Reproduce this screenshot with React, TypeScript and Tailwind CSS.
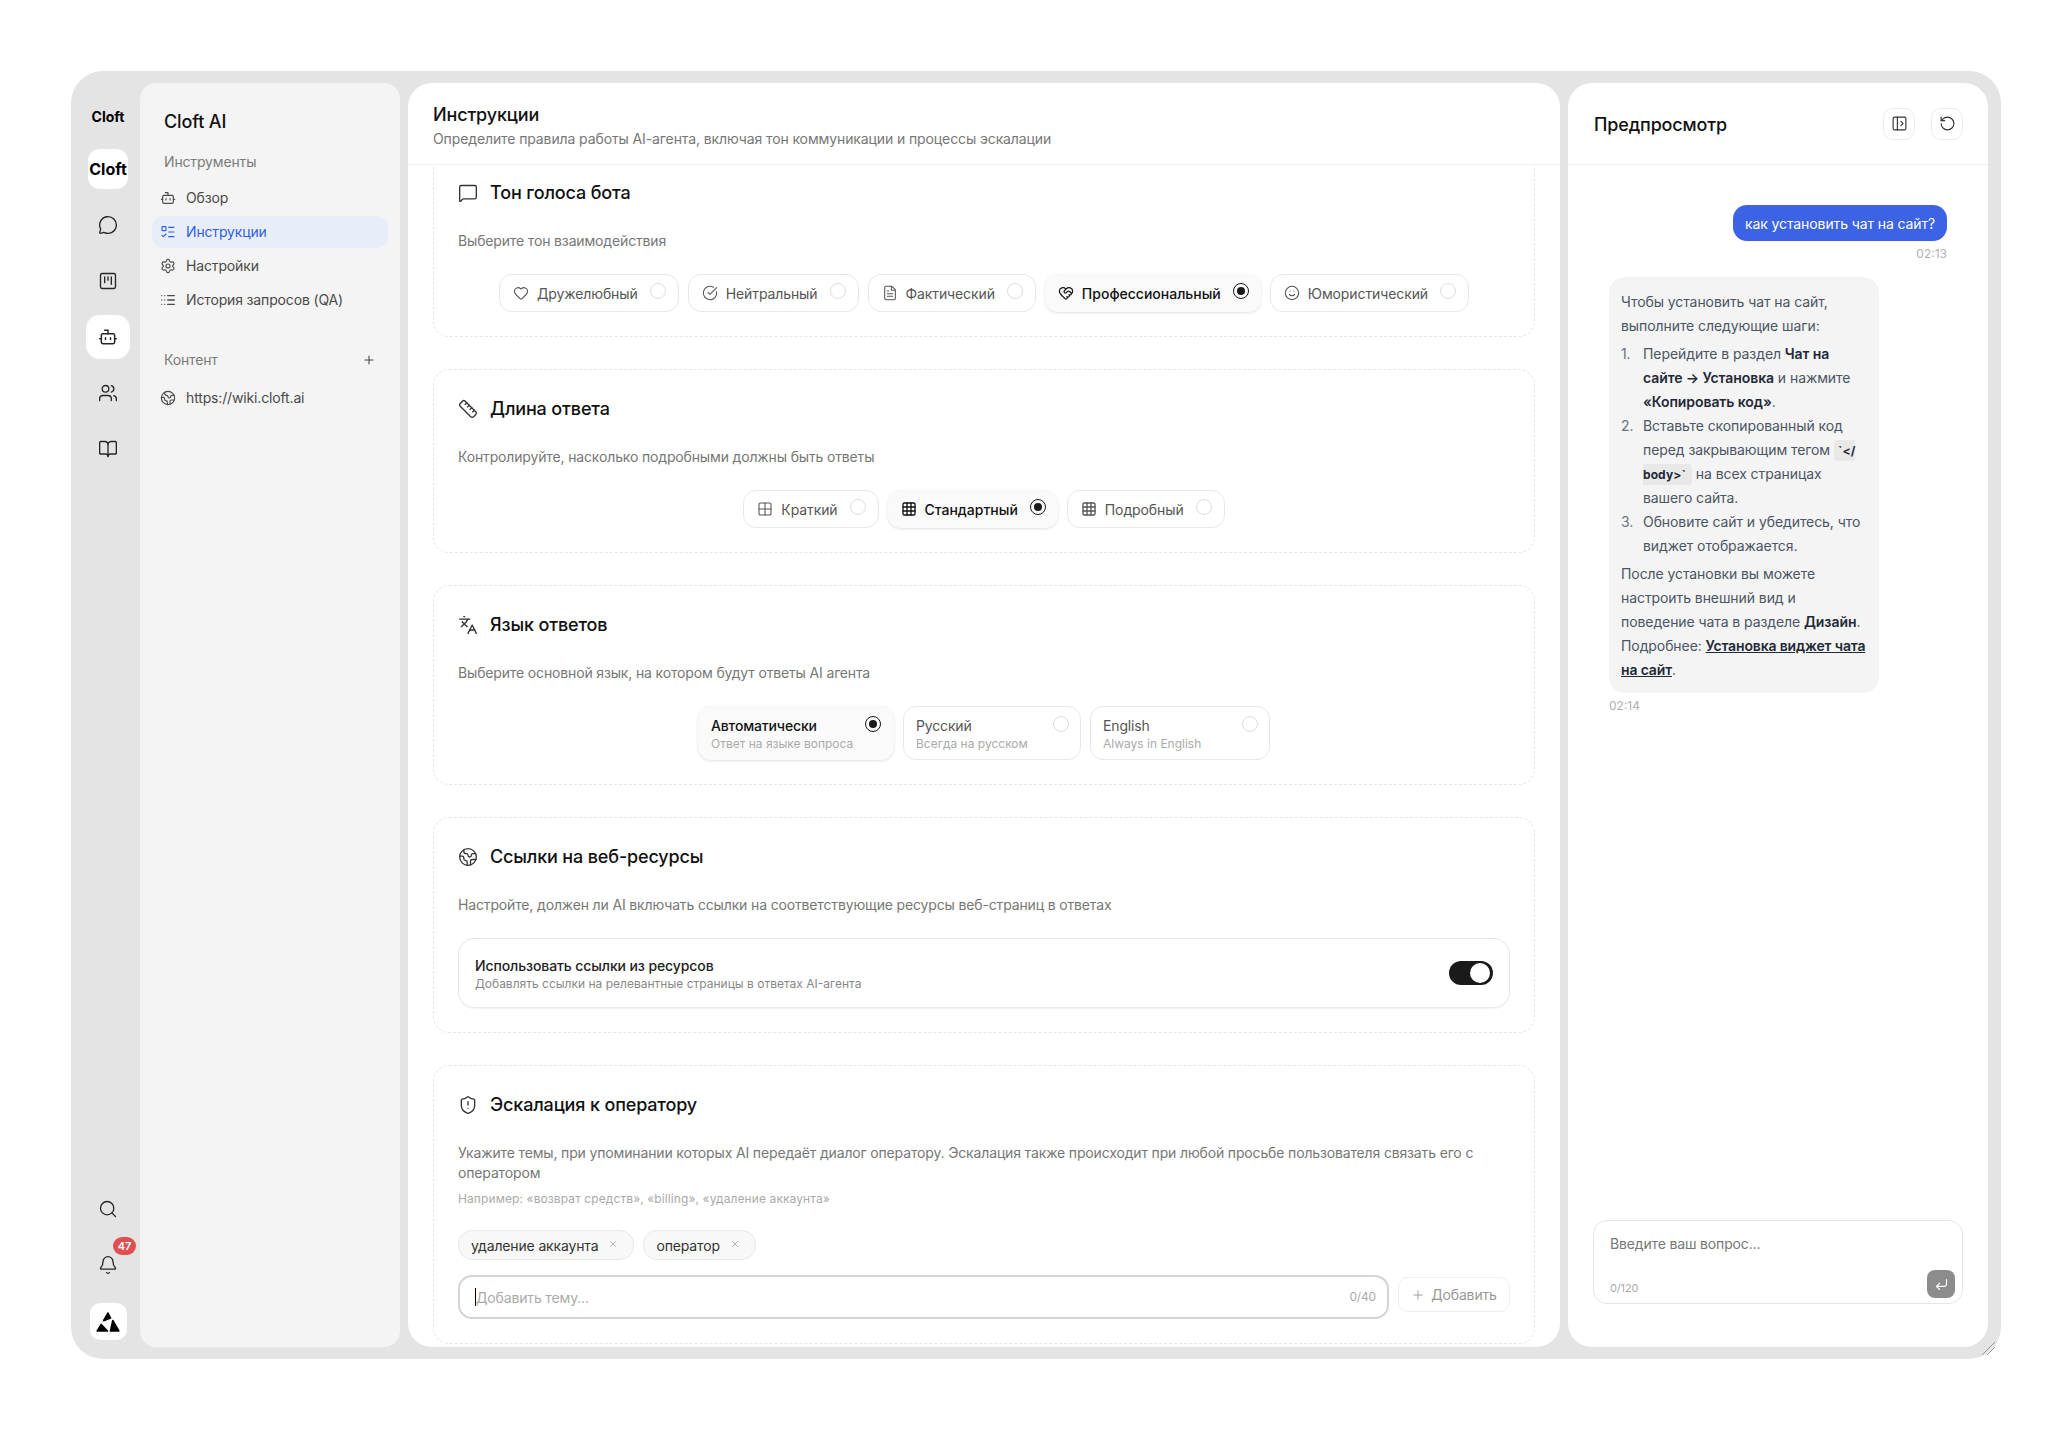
import type { ReactNode } from 'react';
import {
  Bell,
  BookOpen,
  Bot,
  CircleCheckBig,
  CornerDownLeft,
  Earth,
  FileText,
  Grid2x2,
  Grid3x3,
  Heart,
  HeartHandshake,
  Languages,
  ListTodo,
  MessageCircle,
  MessageSquare,
  PanelLeftOpen,
  Plus,
  RotateCcw,
  Ruler,
  Search,
  Settings,
  ShieldAlert,
  Smile,
  SquareKanban,
  Users,
  X,
} from 'lucide-react';

function Radio({ checked }: { checked?: boolean }) {
  if (checked) {
    return (
      <span className="flex h-[16px] w-[16px] shrink-0 items-center justify-center rounded-full border-[1.5px] border-[#1a1a1a]">
        <span className="h-[8px] w-[8px] rounded-full bg-[#1a1a1a]" />
      </span>
    );
  }
  return <span className="block h-[16px] w-[16px] shrink-0 rounded-full border border-[#dedede]" />;
}

function Pill({ icon, label, checked }: { icon: ReactNode; label: string; checked?: boolean }) {
  return (
    <div
      className={`flex h-[38px] items-center rounded-[13px] pl-[13px] pr-[12px] text-sm ${
        checked
          ? 'bg-[#fafafa] font-medium tracking-normal text-[#111111] shadow-[0_1px_3px_rgba(0,0,0,0.12)]'
          : 'border border-[#e8e8e8] bg-white tracking-[-0.1px] text-[#555555]'
      }`}
    >
      <span className="mr-[8px] flex h-[16px] w-[16px] items-center justify-center">{icon}</span>
      <span className="mr-[12px] mt-[1px]">{label}</span>
      <span className="mb-[5px] flex">
        <Radio checked={checked} />
      </span>
    </div>
  );
}

function LangCard({ title, sub, checked, width }: { title: string; sub: string; checked?: boolean; width: string }) {
  return (
    <div
      className={`flex h-[54px] items-start justify-between rounded-[13px] ${width} ${
        checked
          ? 'bg-[#fafafa] pl-[13px] pr-[13px] pt-[10px] shadow-[0_1px_3px_rgba(0,0,0,0.12)]'
          : 'border border-[#e8e8e8] bg-white pl-[12px] pr-[11px] pt-[9px]'
      }`}
    >
      <div>
        <div className={`text-sm leading-[19px] ${checked ? 'font-medium text-[#111111]' : 'text-[#555555]'}`}>{title}</div>
        <div className="text-xs leading-[17px] tracking-normal text-[#aaaaaa]">{sub}</div>
      </div>
      <span className="flex">
        <Radio checked={checked} />
      </span>
    </div>
  );
}

function Section({ icon, title, children, className = '' }: { icon: ReactNode; title: string; children: ReactNode; className?: string }) {
  return (
    <section className={`rounded-[16px] border border-dashed border-[#e6e6e6] p-[24px] ${className}`}>
      <div className="flex h-[30px] items-center gap-[12px]">
        <span className="flex h-[20px] w-[20px] items-center justify-center text-[#333333]">{icon}</span>
        <h3 className="text-lg font-medium text-[#111111]">{title}</h3>
      </div>
      {children}
    </section>
  );
}

function Desc({ children }: { children: ReactNode }) {
  return <p className="mt-[23px] text-sm leading-[20px] text-[#777777]">{children}</p>;
}

function NavItem({ icon, label, active }: { icon: ReactNode; label: string; active?: boolean }) {
  return (
    <div
      className={`flex h-[32px] items-center gap-[10px] rounded-[10px] px-[8px] text-sm ${
        active ? 'bg-[#e8eef9] text-[#2f5fe0]' : 'text-[#4a4a4a]'
      }`}
    >
      <span className="flex h-[16px] w-[16px] items-center justify-center">{icon}</span>
      <span className="h-[16px] overflow-hidden leading-[16px]">{label}</span>
    </div>
  );
}

function RailIcon({ children, active }: { children: ReactNode; active?: boolean }) {
  return (
    <div
      className={`flex h-[44px] w-[44px] items-center justify-center rounded-[14px] text-[#262626] ${
        active ? 'bg-white' : ''
      }`}
    >
      {children}
    </div>
  );
}

function Tag({ label }: { label: string }) {
  return (
    <span className="flex h-[30px] items-center gap-[10px] rounded-[14px] border border-[#e8e8e8] bg-[#f8f8f8] pl-[12px] pr-[15px] text-sm text-[#333333]">
      <span className="mt-[1px]">{label}</span>
      <X size={10} strokeWidth={1.5} className="mb-[2px] text-[#888888]" />
    </span>
  );
}

// dotted rows with lines, lucide's List has only one dot column
function HistoryIcon() {
  return (
    <svg width="16" height="16" viewBox="0 0 24 24" fill="none" stroke="currentColor" strokeWidth="2" strokeLinecap="round">
      <path d="M2.5 5.5h.01M7 5.5h.01M2.5 12h.01M7 12h.01M2.5 18.5h.01M7 18.5h.01M11.5 5.5h10M11.5 12h10M11.5 18.5h10" />
    </svg>
  );
}

export default function App() {
  return (
    <div className="min-h-screen bg-white pl-[71px] pt-[71px] font-[Inter,sans-serif] tracking-[-0.15px]">
      <div className="relative flex h-[1288px] w-[1930px] rounded-[32px] bg-[#e4e4e4] pb-[12px] pr-[13px] pt-[12px]">
        {/* icon rail */}
        <aside className="flex w-[69px] flex-col items-center pl-[5px] tracking-normal">
          <div className="mt-[24px] text-sm font-bold leading-[20px] text-black">Cloft</div>
          <div className="mt-[22px] flex h-[40px] w-[40px] items-center justify-center rounded-[12px] bg-white text-base font-bold text-black">
            Cloft
          </div>
          <div className="mt-[14px] flex flex-col gap-[12px]">
            <RailIcon><MessageCircle size={20} strokeWidth={1.6} /></RailIcon>
            <RailIcon><SquareKanban size={20} strokeWidth={1.6} /></RailIcon>
            <RailIcon active><Bot size={20} strokeWidth={1.8} /></RailIcon>
            <RailIcon><Users size={20} strokeWidth={1.6} /></RailIcon>
            <RailIcon><BookOpen size={20} strokeWidth={1.6} /></RailIcon>
          </div>
          <div className="mt-auto flex flex-col items-center">
            <RailIcon><Search size={20} strokeWidth={1.6} /></RailIcon>
            <div className="relative mt-[12px]">
              <RailIcon><Bell size={20} strokeWidth={1.6} /></RailIcon>
              <span className="absolute left-[27px] top-[-6px] flex h-[18px] w-[23px] items-center justify-center rounded-full bg-[#e05050] text-[11px] font-semibold text-white">
                47
              </span>
            </div>
            <div className="mb-[7px] mt-[16px] flex h-[37px] w-[37px] items-center justify-center rounded-[10px] bg-white">
              <svg width="24" height="22" viewBox="0 0 24 22" fill="black" stroke="black" strokeWidth="1.6" strokeLinejoin="round">
                <polygon points="12,2 7.5,9.8 14.5,7" />
                <polygon points="1.2,20 5.2,13.5 11.5,20" />
                <polygon points="16.8,9.5 22.8,20 14.5,20" />
              </svg>
            </div>
          </div>
        </aside>

        {/* sidebar */}
        <nav className="w-[260px] rounded-[16px] bg-[#f4f4f4] px-[12px] pt-[25px]">
          <div className="pl-[12px] text-lg font-medium leading-[28px] text-[#111111]">Cloft AI</div>
          <div className="mt-[16px] pl-[12px] text-sm leading-[20px] text-[#7a7a7a]">Инструменты</div>
          <div className="mt-[10px] flex flex-col gap-[2px]">
            <NavItem icon={<Bot size={16} strokeWidth={1.7} />} label="Обзор" />
            <NavItem active icon={<ListTodo size={16} strokeWidth={1.7} />} label="Инструкции" />
            <NavItem icon={<Settings size={16} strokeWidth={1.7} />} label="Настройки" />
            <NavItem icon={<HistoryIcon />} label="История запросов (QA)" />
          </div>
          <div className="mt-[34px] flex items-center justify-between pl-[12px] pr-[12px] text-sm leading-[20px] text-[#7a7a7a]">
            Контент
            <Plus size={14} strokeWidth={1.8} className="text-[#444444]" />
          </div>
          <div className="mt-[12px]">
            <NavItem icon={<Earth size={16} strokeWidth={1.7} />} label="https://wiki.cloft.ai" />
          </div>
        </nav>

        {/* instructions */}
        <main className="ml-[8px] flex w-[1152px] flex-col overflow-hidden rounded-[24px] bg-white">
          <header className="h-[82px] shrink-0 border-b border-[#f0f0f0] px-[25px] pt-[19px]">
            <h1 className="text-lg font-medium leading-[26px] text-[#111111]">Инструкции</h1>
            <p className="mt-px text-sm leading-[20px] tracking-[-0.11px] text-[#777777]">
              Определите правила работы AI-агента, включая тон коммуникации и процессы эскалации
            </p>
          </header>
          <div className="flex-1 overflow-hidden px-[25px]">
            <div className="mt-[-12px] flex flex-col gap-[32px]">
              <Section icon={<MessageSquare size={20} strokeWidth={1.6} />} title="Тон голоса бота">
                <Desc>Выберите тон взаимодействия</Desc>
                <div className="mt-[23px] flex justify-center gap-[9px]">
                  <Pill icon={<Heart size={16} strokeWidth={1.6} />} label="Дружелюбный" />
                  <Pill icon={<CircleCheckBig size={16} strokeWidth={1.6} />} label="Нейтральный" />
                  <Pill icon={<FileText size={16} strokeWidth={1.6} />} label="Фактический" />
                  <Pill checked icon={<HeartHandshake size={16} strokeWidth={1.8} />} label="Профессиональный" />
                  <Pill icon={<Smile size={16} strokeWidth={1.6} />} label="Юмористический" />
                </div>
              </Section>

              <Section icon={<Ruler size={20} strokeWidth={1.6} />} title="Длина ответа">
                <Desc>Контролируйте, насколько подробными должны быть ответы</Desc>
                <div className="mt-[23px] flex justify-center gap-[9px]">
                  <Pill icon={<Grid2x2 size={16} strokeWidth={1.6} />} label="Краткий" />
                  <Pill checked icon={<Grid3x3 size={16} strokeWidth={2} />} label="Стандартный" />
                  <Pill icon={<Grid3x3 size={16} strokeWidth={2} />} label="Подробный" />
                </div>
              </Section>

              <Section icon={<Languages size={20} strokeWidth={1.6} />} title="Язык ответов">
                <Desc>Выберите основной язык, на котором будут ответы AI агента</Desc>
                <div className="mt-[23px] flex justify-center gap-[9px]">
                  <LangCard checked title="Автоматически" sub="Ответ на языке вопроса" width="w-[196px]" />
                  <LangCard title="Русский" sub="Всегда на русском" width="w-[178px]" />
                  <LangCard title="English" sub="Always in English" width="w-[180px]" />
                </div>
              </Section>

              <Section icon={<Earth size={20} strokeWidth={1.6} />} title="Ссылки на веб-ресурсы">
                <Desc>Настройте, должен ли AI включать ссылки на соответствующие ресурсы веб-страниц в ответах</Desc>
                <div className="mt-[23px] flex h-[70px] items-center justify-between rounded-[16px] border border-[#e8e8e8] px-[16px] shadow-[0_1px_1px_rgba(0,0,0,0.05)]">
                  <div className="pt-[3px]">
                    <div className="text-sm font-medium leading-[18px] tracking-[-0.1px] text-[#222222]">Использовать ссылки из ресурсов</div>
                    <div className="text-xs leading-[18px] tracking-normal text-[#888888]">Добавлять ссылки на релевантные страницы в ответах AI-агента</div>
                  </div>
                  <div className="flex h-[24px] w-[44px] items-center justify-end rounded-full bg-[#1a1a1a] pr-[3px]">
                    <span className="h-[20px] w-[20px] rounded-full bg-white" />
                  </div>
                </div>
              </Section>

              <Section icon={<ShieldAlert size={20} strokeWidth={1.6} />} title="Эскалация к оператору">
                <p className="mt-[23px] text-sm leading-[20px] text-[#777777]">
                  Укажите темы, при упоминании которых AI передаёт диалог оператору. Эскалация также происходит при любой просьбе пользователя связать его с оператором
                </p>
                <p className="mt-[8px] text-xs leading-[16px] tracking-[0.1px] text-[#aaaaaa]">Например: «возврат средств», «billing», «удаление аккаунта»</p>
                <div className="mt-[23px] flex gap-[9px]">
                  <Tag label="удаление аккаунта" />
                  <Tag label="оператор" />
                </div>
                <div className="mt-[15px] flex items-start gap-[9px]">
                  <div className="flex h-[44px] flex-1 items-center rounded-[14px] border-2 border-[#d4d4d4] pl-[15px] pr-[11px]">
                    <span className="h-[18px] w-px bg-black" />
                    <input
                      placeholder="Добавить тему..."
                      className="mt-[1px] min-w-0 flex-1 bg-transparent text-sm text-[#333333] outline-none placeholder:text-[#aaaaaa]"
                    />
                    <span className="text-xs text-[#aaaaaa]">0/40</span>
                  </div>
                  <button className="mt-[2px] flex h-[35px] w-[112px] items-center justify-center gap-[6px] rounded-[10px] border border-[#f0f0f0] text-sm text-[#999999]">
                    <Plus size={14} strokeWidth={1.6} />
                    Добавить
                  </button>
                </div>
              </Section>
            </div>
          </div>
        </main>

        {/* preview */}
        <aside className="ml-[8px] flex w-[420px] flex-col rounded-[24px] bg-white">
          <header className="flex h-[82px] shrink-0 items-center justify-between border-b border-[#f0f0f0] pl-[26px] pr-[25px]">
            <h2 className="mt-[2px] text-lg font-medium text-[#111111]">Предпросмотр</h2>
            <div className="flex gap-[16px]">
              <button className="flex h-[32px] w-[32px] items-center justify-center rounded-[10px] border border-[#ebebeb] text-[#333333]">
                <PanelLeftOpen size={17} strokeWidth={1.6} />
              </button>
              <button className="flex h-[32px] w-[32px] items-center justify-center rounded-[10px] border border-[#ebebeb] text-[#333333]">
                <RotateCcw size={17} strokeWidth={1.6} />
              </button>
            </div>
          </header>
          <div className="flex flex-1 flex-col px-[41px] pt-[40px]">
            <div className="flex flex-col items-end">
              <div className="flex h-[36px] items-center rounded-[14px] bg-[#3b63e3] px-[12px] pt-[1px] text-sm tracking-[-0.1px] text-white">как установить чат на сайт?</div>
              <div className="mt-[5px] text-xs leading-[16px] tracking-normal text-[#b0b0b0]">02:13</div>
            </div>
            <div className="mt-[15px] w-[270px] rounded-[16px] bg-[#f4f4f4] px-[12px] pb-[11px] pt-[13px] text-sm leading-[24px] tracking-[-0.08px] text-[#4b5563]">
              <p>Чтобы установить чат на сайт, выполните следующие шаги:</p>
              <ol className="mt-[4px]">
                <li className="flex">
                  <span className="w-[22px] shrink-0 text-[#6b7280]">1.</span>
                  <div>
                    Перейдите в раздел <b className="font-semibold text-[#1f2937]">Чат на сайте → Установка</b> и нажмите{' '}
                    <b className="font-semibold text-[#1f2937]">«Копировать код»</b>.
                  </div>
                </li>
                <li className="flex">
                  <span className="w-[22px] shrink-0 text-[#6b7280]">2.</span>
                  <div>
                    Вставьте скопированный код перед закрывающим тегом{' '}
                    <code className="rounded-[4px] bg-[#e8e8e8] py-[3px] pl-[4px] pr-[6px] font-[Inter,sans-serif] text-xs font-bold tracking-[0.1px] text-[#1f2937]">`&lt;/<wbr />body&gt;`</code>{' '}
                    на всех страницах вашего сайта.
                  </div>
                </li>
                <li className="flex">
                  <span className="w-[22px] shrink-0 text-[#6b7280]">3.</span>
                  <div>Обновите сайт и убедитесь, что виджет отображается.</div>
                </li>
              </ol>
              <p className="mt-[4px]">
                После установки вы можете настроить внешний вид и поведение чата в разделе <b className="font-semibold text-[#1f2937]">Дизайн</b>.
                Подробнее: <a className="font-semibold tracking-[-0.15px] text-[#1f2937] underline">Установка виджет чата на сайт</a>.
              </p>
            </div>
            <div className="mt-[5px] text-xs leading-[16px] tracking-normal text-[#b0b0b0]">02:14</div>
          </div>
          <div className="mb-[43px] ml-[25px] mr-[25px] flex h-[84px] flex-col rounded-[14px] border border-[#e6e6e6] pb-[5px] pl-[16px] pr-[7px] pt-[13px]">
            <input
              placeholder="Введите ваш вопрос..."
              className="bg-transparent text-sm leading-[20px] outline-none placeholder:text-[#777777]"
            />
            <div className="mt-auto flex items-end justify-between">
              <span className="mb-[3px] text-[11px] leading-[14px] text-[#aaaaaa]">0/120</span>
              <button className="flex h-[28px] w-[28px] items-center justify-center rounded-[8px] bg-[#8c8c8c] text-white">
                <CornerDownLeft size={15} strokeWidth={1.8} />
              </button>
            </div>
          </div>
        </aside>

        {/* resize grip */}
        <svg className="absolute bottom-[4px] right-[6px]" width="13" height="13" viewBox="0 0 13 13" stroke="#999999" strokeWidth="1">
          <path d="M0 13 13 0M5 13l8-8" />
        </svg>
      </div>
    </div>
  );
}
